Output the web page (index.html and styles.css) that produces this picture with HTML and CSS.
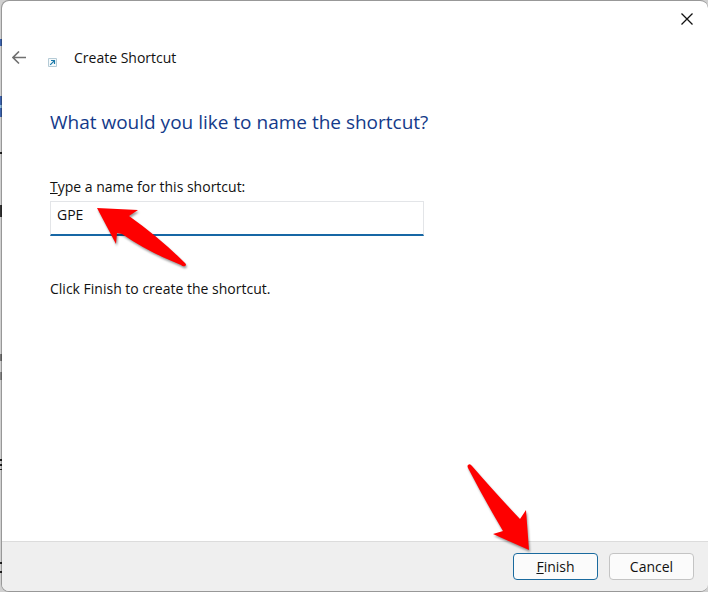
FILE: index.html
```html
<!DOCTYPE html>
<html lang="en">
<head>
<meta charset="utf-8">
<meta name="viewport" content="width=device-width, initial-scale=1">
<title>Create Shortcut</title>
<link rel="stylesheet" href="styles.css">
</head>
<body>
<form class="dialog">
  <div class="titlebar">
    <button class="icon-button" type="button" aria-label="Close">
      <svg width="12" height="12" viewBox="0 0 12 12"><path d="M.5.5l11 11M11.5.5l-11 11" fill="none" stroke="#111" stroke-width="1.3"/></svg>
    </button>
  </div>
  <header class="header">
    <button class="icon-button" type="button" aria-label="Back">
      <svg width="14" height="14" viewBox="0 0 14 14"><path d="M14 6.5H1M7 .5l-6 6 6 6" fill="none" stroke="#707070" stroke-width="1.6"/></svg>
    </button>
    <svg class="shortcut-icon" width="9" height="9" viewBox="0 0 9 9"><path d="M.5.5h8v8h-8z" fill="#f5fafc" stroke="#b5cbd6"/><path d="M2.2 6.8l4-4M3 2.5h3.5V6" fill="none" stroke="#1878a8" stroke-width="1.2"/></svg>
    <span>Create Shortcut</span>
  </header>
  <main class="content">
    <h1 class="heading">What would you like to name the shortcut?</h1>
    <label class="label" for="name"><u>T</u>ype a name for this shortcut:</label>
    <div class="field">
      <input class="input" id="name" type="text" value="GPE">
      <svg class="pointer pointer-field" width="94" height="66" viewBox="0 0 94 66"><path d="M2 3L43 5l-9 6Q65 33 90 58q2 2 0 3t-4-1Q53 47 27 29l-5-1-1 11z" fill="#fe0000"/></svg>
    </div>
    <p class="hint">Click Finish to create the shortcut.</p>
  </main>
  <footer class="footer">
    <div class="action">
      <button class="button button-default" type="button"><span><u>F</u>inish</span></button>
      <svg class="pointer pointer-finish" width="66" height="90" viewBox="0 0 66 90"><path d="M2 3q2-2 4 1Q33 35 54 57l6-9 3 40-36-16 10-3Q18 37 2 6q-1-2 0-3z" fill="#fe0000"/></svg>
    </div>
    <button class="button" type="button">Cancel</button>
  </footer>
</form>
</body>
</html>
```
FILE: styles.css
```css
* {
  box-sizing: border-box;
}

body {
  margin: 0;
  min-height: 100vh;
  display: flex;
  padding: 0 0 0 1px;
  background:
    linear-gradient(#3e64ae, #3e64ae) 0 39px / 2px 7px no-repeat,
    linear-gradient(#3e64ae 9px, #8dbce0 9px 12px, #3e64ae 12px) 0 96px / 2px 21px no-repeat,
    linear-gradient(#222, #222) 0 152px / 2px 2px no-repeat,
    linear-gradient(#333, #333) 0 205px / 2px 12px no-repeat,
    linear-gradient(#777, #777) 0 354px / 2px 7px no-repeat,
    linear-gradient(#888, #888) 0 372px / 2px 8px no-repeat,
    repeating-linear-gradient(#222 0 2px, #ccc 2px 5px) 0 459px / 2px 11px no-repeat,
    linear-gradient(#222, #222) 0 562px / 2px 2px no-repeat,
    linear-gradient(#222, #222) 0 571px / 2px 2px no-repeat,
    #d0d0d0;
  color: #111;
  font: 14px/20px "Open Sans", "Noto Sans", sans-serif;
}

.dialog {
  flex: 1;
  display: flex;
  flex-direction: column;
  overflow: hidden;
  border: 1px solid #0004;
  border-right: 0;
  border-radius: 8px;
  background: #fff;
  background-clip: padding-box;
}

.titlebar {
  display: flex;
  justify-content: flex-end;
  padding: 9px 12px 0;
}

.icon-button {
  display: flex;
  padding: 3px;
  border: 0;
  background: none;
}

.header {
  display: flex;
  align-items: center;
  margin-top: 20px;
  padding-left: 7px;
}

.shortcut-icon {
  margin: 9px 17px 0 19px;
}

.content {
  flex: 1;
  display: flex;
  flex-direction: column;
  align-items: flex-start;
  padding: 40px 48px;
}

.heading {
  margin: 0;
  color: #143a8a;
  font-size: 19px;
  font-weight: 400;
  line-height: 28px;
}

.label {
  margin-top: 41px;
}

.field {
  position: relative;
  width: 100%;
  max-width: 374px;
  margin-top: 4px;
}

.input {
  display: block;
  width: 100%;
  height: 35px;
  padding: 0 6px 8px;
  border: 1px solid #e3e5e8;
  border-bottom: 2px solid #1767a5;
  border-radius: 0;
  outline: 0;
  background: #fff;
  color: inherit;
  font: inherit;
}

.hint {
  margin: 43px 0 0;
}

.footer {
  display: flex;
  justify-content: flex-end;
  gap: 11px;
  padding: 11px 14px;
  border-top: 1px solid #dcdcdc;
  background: #efefef;
}

.action {
  position: relative;
}

.button {
  width: 85px;
  height: 27px;
  padding: 0;
  border: 1px solid #c4c4c4;
  border-radius: 4px;
  background: #fbfbfb;
  color: inherit;
  font: inherit;
  line-height: 20px;
}

.button-default {
  border-color: #1a6a9e;
}

.pointer {
  position: absolute;
  pointer-events: none;
  filter: drop-shadow(1px 2px 1px #0006);
}

.pointer-field {
  top: 4px;
  left: 45px;
}

.pointer-finish {
  right: 66px;
  bottom: 28px;
}
```
